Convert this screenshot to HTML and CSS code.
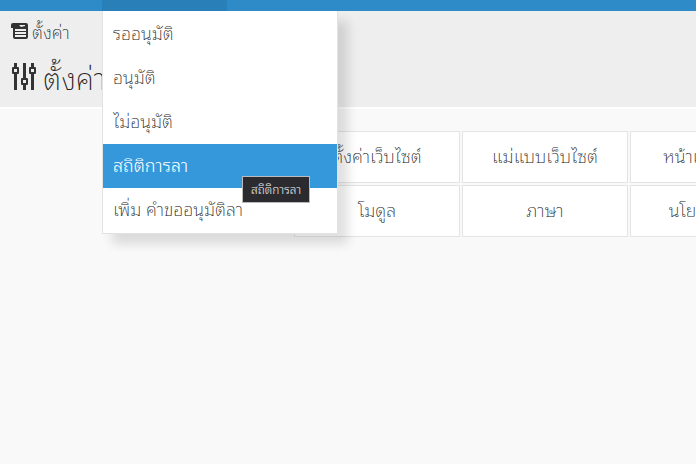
FILE: index.html
```html
<!DOCTYPE html>
<html lang="th">
<head>
<meta charset="utf-8">
<meta name="viewport" content="width=device-width, initial-scale=1">
<title>ตั้งค่า</title>
<link rel="stylesheet" href="styles.css">
</head>
<body>
<nav class="topbar">
  <div class="topbar-item">
    <ul class="menu">
      <li><a class="menu-link" href="#">รออนุมัติ</a></li>
      <li><a class="menu-link" href="#">อนุมัติ</a></li>
      <li><a class="menu-link" href="#">ไม่อนุมัติ</a></li>
      <li class="menu-current"><a class="menu-link active" href="#">สถิติการลา</a><span class="tooltip" role="tooltip">สถิติการลา</span></li>
      <li><a class="menu-link" href="#">เพิ่ม คำขออนุมัติลา</a></li>
    </ul>
  </div>
</nav>
<header class="page-header">
  <a class="breadcrumb" href="#">
    <svg class="crumb-icon" viewBox="0 0 17 18" aria-hidden="true">
      <path fill="#333" fill-rule="evenodd" d="M2 1h13a2 2 0 0 1 2 2v12a2 2 0 0 1-2 2H4a2 2 0 0 1-2-2V6H0V3q0-2 2-2zM8 3l2 2 4-1V3zM4 7v2h11V7zM4 10v2h11v-2zM4 13v2h11v-2z"/>
    </svg>
    <span>ตั้งค่า</span>
  </a>
  <h1 class="title">
    <svg class="title-icon" viewBox="0 0 26 28" aria-hidden="true">
      <path fill="none" stroke="#333" stroke-width="3" d="M4.500 0v4M4.500 11v16M13.500 0v16M13.500 22v5M21.500 0v4M21.500 11v16"/>
      <path fill="#eee" stroke="#333" stroke-width="2" stroke-linejoin="round" d="M2 5h5v5H2zM11 16h5v5h-5zM19 5h5v5h-5z"/>
    </svg>
    <span>ตั้งค่า</span>
  </h1>
</header>
<main class="content">
  <div class="cards">
    <a class="card" href="#">ตั้งค่าเว็บไซต์</a>
    <a class="card" href="#">แม่แบบเว็บไซต์</a>
    <a class="card" href="#">หน้าเข้าสู่ระบบ</a>
    <a class="card" href="#">โมดูล</a>
    <a class="card" href="#">ภาษา</a>
    <a class="card" href="#">นโยบายคุกกี้</a>
  </div>
</main>
</body>
</html>
```
FILE: styles.css
```css
* { box-sizing: border-box; }
body {
  margin: 0;
  background: #f9f9f9;
  color: #222;
  font-family: "Noto Sans Thai Looped", Loma, "Noto Sans", sans-serif;
  font-size: 18px;
  font-weight: 200;
  line-height: 24px;
}
a { color: inherit; text-decoration: none; }
.topbar { display: flex; height: 11px; padding-left: 102px; background: #2e8bc8; }
.topbar-item { position: relative; width: 125px; background: #2980b9; }
.menu {
  position: absolute;
  z-index: 2;
  top: 100%;
  left: 0;
  width: 236px;
  margin: 0;
  padding: 1px 0;
  list-style: none;
  background: #fff;
  border: 1px solid #e2e2e2;
  border-top-width: 0;
  box-shadow: 10px 10px 10px rgba(0, 0, 0, .12);
}
.menu-current { position: relative; }
.menu-link { display: block; padding: 8px 10px 12px; white-space: nowrap; }
.active { background: #3498db; color: #fff; font-weight: 300; }
.tooltip {
  position: absolute;
  z-index: 3;
  top: 32px;
  left: 139px;
  padding: 2px 8px 3px;
  border: 1px solid #bbb;
  background: #2b2b2f;
  color: #eee;
  font-size: 12px;
  font-weight: 300;
  line-height: 20px;
  white-space: nowrap;
}
.page-header { padding: 8px 11px 0; background: #eee; border-bottom: 2px solid #fff; }
.breadcrumb { display: flex; align-items: center; gap: 4px; }
.crumb-icon { width: 17px; height: 18px; }
.title {
  display: flex;
  align-items: center;
  gap: 6px;
  margin: 0;
  padding: 12px 0 8px;
  font-size: 30px;
  font-weight: 200;
  line-height: 44px;
}
.title-icon { width: 26px; height: 28px; }
.content { padding: 22px 0 24px 294px; overflow: hidden; }
.cards { display: grid; grid-template-columns: repeat(3, 166px); gap: 2px; }
.card {
  padding: 11px 8px 15px;
  border: 1px solid #e4e4e4;
  background: #fff;
  text-align: center;
  white-space: nowrap;
}
```
